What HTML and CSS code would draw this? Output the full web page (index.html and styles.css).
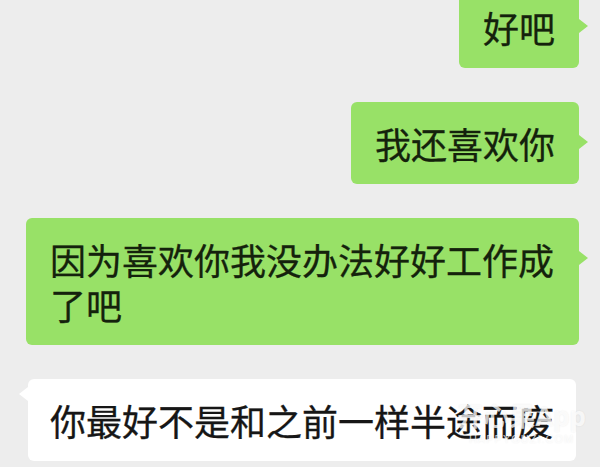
FILE: index.html
```html
<!DOCTYPE html>
<html lang="zh-CN">
<head>
    <meta charset="UTF-8">
    <meta name="viewport" content="width=device-width, initial-scale=1.0">
    <title>聊天记录</title>
    <link rel="stylesheet" href="styles.css">
</head>
<body>
    <div class="chat">
        <div class="row mine">
            <div class="bubble green">好吧</div>
        </div>
        <div class="row mine">
            <div class="bubble green">我还喜欢你</div>
        </div>
        <div class="row mine">
            <div class="bubble green">因为喜欢你我没办法好好工作成了吧</div>
        </div>
        <div class="row theirs">
            <div class="bubble white">你最好不是和之前一样半途而废</div>
        </div>
    </div>

    <div class="watermark">
        <div class="wm-name">开心果App</div>
        <div class="wm-site">HAPPYGUZI.COM</div>
    </div>
</body>
</html>
```

FILE: styles.css
```css
body {
    margin: 0;
    width: 600px;
    height: 467px;
    overflow: hidden;
    background: #ededed;
    font-family: "Noto Sans CJK SC", "Noto Sans", sans-serif;
    color: #141414;
    position: relative;
}
.chat {
    display: flex;
    flex-direction: column;
    gap: 34px;
    margin-top: -14px;
    padding: 0 21px 0 28px;
}
.row {
    display: flex;
}
.row.mine {
    justify-content: flex-end;
}
.row.theirs {
    justify-content: flex-start;
}
.bubble {
    position: relative;
    flex-shrink: 0;
    box-sizing: border-box;
    max-width: 553px;
    padding: 19px 24px 18px 24px;
    border-radius: 6px;
    font-size: 36px;
    line-height: 45px;
    -webkit-text-stroke: 0.3px currentColor;
}
.bubble.green {
    background: #98e167;
    color: #14220c;
}
.bubble.white {
    background: #ffffff;
    color: #161616;
    padding-left: 22px;
    padding-right: 22px;
}
.bubble.green::after {
    content: "";
    position: absolute;
    right: -9px;
    top: 33px;
    border-left: 9px solid #98e167;
    border-top: 7px solid transparent;
    border-bottom: 7px solid transparent;
}
.bubble.white::after {
    content: "";
    position: absolute;
    left: -9px;
    top: 8px;
    border-right: 9px solid #ffffff;
    border-top: 7px solid transparent;
    border-bottom: 7px solid transparent;
}
.watermark {
    position: absolute;
    right: 14px;
    top: 400px;
    text-align: center;
    color: rgba(255, 255, 255, 0.75);
    text-shadow: 0 0 2px rgba(0, 0, 0, 0.08);
}
.wm-name {
    font-family: "Noto Sans", "Noto Sans CJK SC", sans-serif;
    font-size: 26px;
    font-weight: bold;
    line-height: 32px;
}
.wm-site {
    font-family: "Liberation Sans", sans-serif;
    font-size: 11px;
    letter-spacing: 1px;
    line-height: 14px;
}
```
